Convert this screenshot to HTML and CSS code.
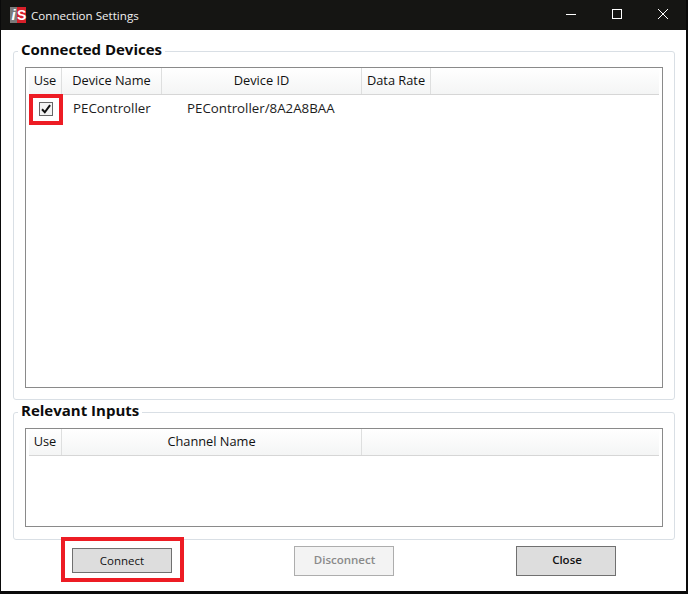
FILE: index.html
```html
<!DOCTYPE html>
<html lang="en">
<head>
<meta charset="utf-8">
<title>Connection Settings</title>
<link rel="stylesheet" href="styles.css">
</head>
<body>
<div class="window">
  <header class="titlebar">
    <div class="logo"><span class="logo-i">i</span><span class="logo-s">S</span></div>
    <div class="title">Connection Settings</div>
    <div class="controls">
      <svg class="ctl" width="46" height="30" viewBox="0 0 46 30"><path d="M18 14.5H28" stroke="#fff" fill="none"/></svg>
      <svg class="ctl" width="46" height="30" viewBox="0 0 46 30"><rect x="18.5" y="9.5" width="9" height="9" stroke="#fff" fill="none"/></svg>
      <svg class="ctl" width="46" height="30" viewBox="0 0 46 30"><path d="M18 9L28 19M28 9L18 19" stroke="#fff" fill="none"/></svg>
    </div>
  </header>
  <main class="content">
    <section class="group group-devices">
      <h2 class="legend">Connected Devices</h2>
      <div class="list list-devices">
        <div class="head">
          <div class="th c-use">Use</div>
          <div class="th c-name">Device Name</div>
          <div class="th c-id">Device ID</div>
          <div class="th c-rate">Data Rate</div>
        </div>
        <div class="row">
          <div class="td c-use">
            <span class="check"><svg width="12" height="12" viewBox="0 0 12 12"><path d="M2 6.3L4.8 9.3L10.1 2.1" stroke="#111" stroke-width="2" fill="none"/></svg></span>
          </div>
          <div class="td c-name cell-name">PEController</div>
          <div class="td c-id cell-id">PEController/8A2A8BAA</div>
        </div>
      </div>
    </section>
    <section class="group group-inputs">
      <h2 class="legend">Relevant Inputs</h2>
      <div class="list list-inputs">
        <div class="head">
          <div class="th c-use">Use</div>
          <div class="th c-channel">Channel Name</div>
        </div>
      </div>
    </section>
    <footer class="actions">
      <button class="btn btn-connect">Connect</button>
      <button class="btn btn-disabled" disabled>Disconnect</button>
      <button class="btn btn-close">Close</button>
    </footer>
  </main>
  <div class="mark mark-check"></div>
  <div class="mark mark-connect"></div>
</div>
</body>
</html>
```
FILE: styles.css
```css
* { box-sizing: border-box; }
html, body { margin: 0; height: 100%; background: #0a0a0a; overflow: hidden; }
body { font-family: "Open Sans", "Noto Sans", sans-serif; font-size: 12px; color: #111; }
.window { position: relative; width: 685px; height: 591px; margin-left: 1px; background: #fff; display: flex; flex-direction: column; }
.titlebar { height: 30px; flex: none; background: #151513; color: #f0f0f0; display: flex; align-items: center; padding-left: 9px; }
.logo { display: flex; width: 16px; height: 16px; font-family: "Liberation Sans", sans-serif; font-weight: 700; font-style: italic; font-size: 15px; line-height: 16px; color: #fff; text-align: center; }
.logo-i { width: 7px; background: #7a7a7a; }
.logo-s { width: 9px; background: #d8202a; font-style: normal; font-size: 14px; }
.title { margin-left: 5px; font-size: 11.6px; }
.controls { margin-left: auto; display: flex; }
.ctl { display: block; }
.content { flex: 1; padding: 21px 11px 0 12px; display: flex; flex-direction: column; }
.group { border: 1px solid #d9dfe5; border-radius: 3px; padding: 0 11px; background: #fff; }
.group-devices { height: 349px; }
.group-inputs { height: 128px; margin-top: 12px; }
.legend { width: fit-content; margin: -13px 0 0 -7px; padding: 0 3px; background: #fff; font-size: 15px; line-height: 21px; font-weight: 700; color: #0c0c0c; }
.list { border: 1px solid #8a8a8a; padding: 0 3px; background: #fff; margin-top: 7px; }
.list-devices { height: 321px; }
.list-inputs { height: 99px; }
.head { height: 27px; display: flex; border-bottom: 1px solid #d6d6d6; background: linear-gradient(#fff, #f4f5f5); }
.th { height: 26px; line-height: 25px; text-align: center; border-right: 1px solid #dedfdf; font-size: 12.8px; color: #111; }
.row { display: flex; height: 27px; align-items: center; }
.td { font-size: 13.3px; text-align: center; color: #1c1c1c; }
.cell-name { text-align: left; padding: 0 0 2px 11px; }
.cell-id { text-align: left; padding: 0 0 2px 25px; }
.c-use { width: 33px; }
.c-name { width: 100px; }
.c-id { width: 200px; }
.c-rate { width: 69px; }
.c-channel { width: 300px; }
.check { display: block; width: 14px; height: 14px; margin: 0 auto; border: 1px solid #666; background: #f4f4f4; }
.check svg { display: block; }
.actions { display: flex; padding: 6px 0 0 59px; gap: 122px; align-items: flex-start; }
.btn { width: 100px; height: 30px; padding: 0 0 3px; border: 1px solid #707070; background: #dddddd; font: 600 11.5px "Open Sans", "Noto Sans", sans-serif; color: #111; }
.btn-connect { height: 25px; margin-top: 2px; padding: 0; font-weight: 400; }
.btn-disabled { border-color: #adadad; background: #f3f3f3; color: #8a8a8a; padding-left: 1px; }
.btn-close { padding-left: 2px; }
.mark { position: absolute; border: 4px solid #ed1c24; }
.mark-check { left: 28px; top: 94px; width: 34px; height: 31px; }
.mark-connect { left: 60px; top: 537px; width: 123px; height: 45px; }
```
